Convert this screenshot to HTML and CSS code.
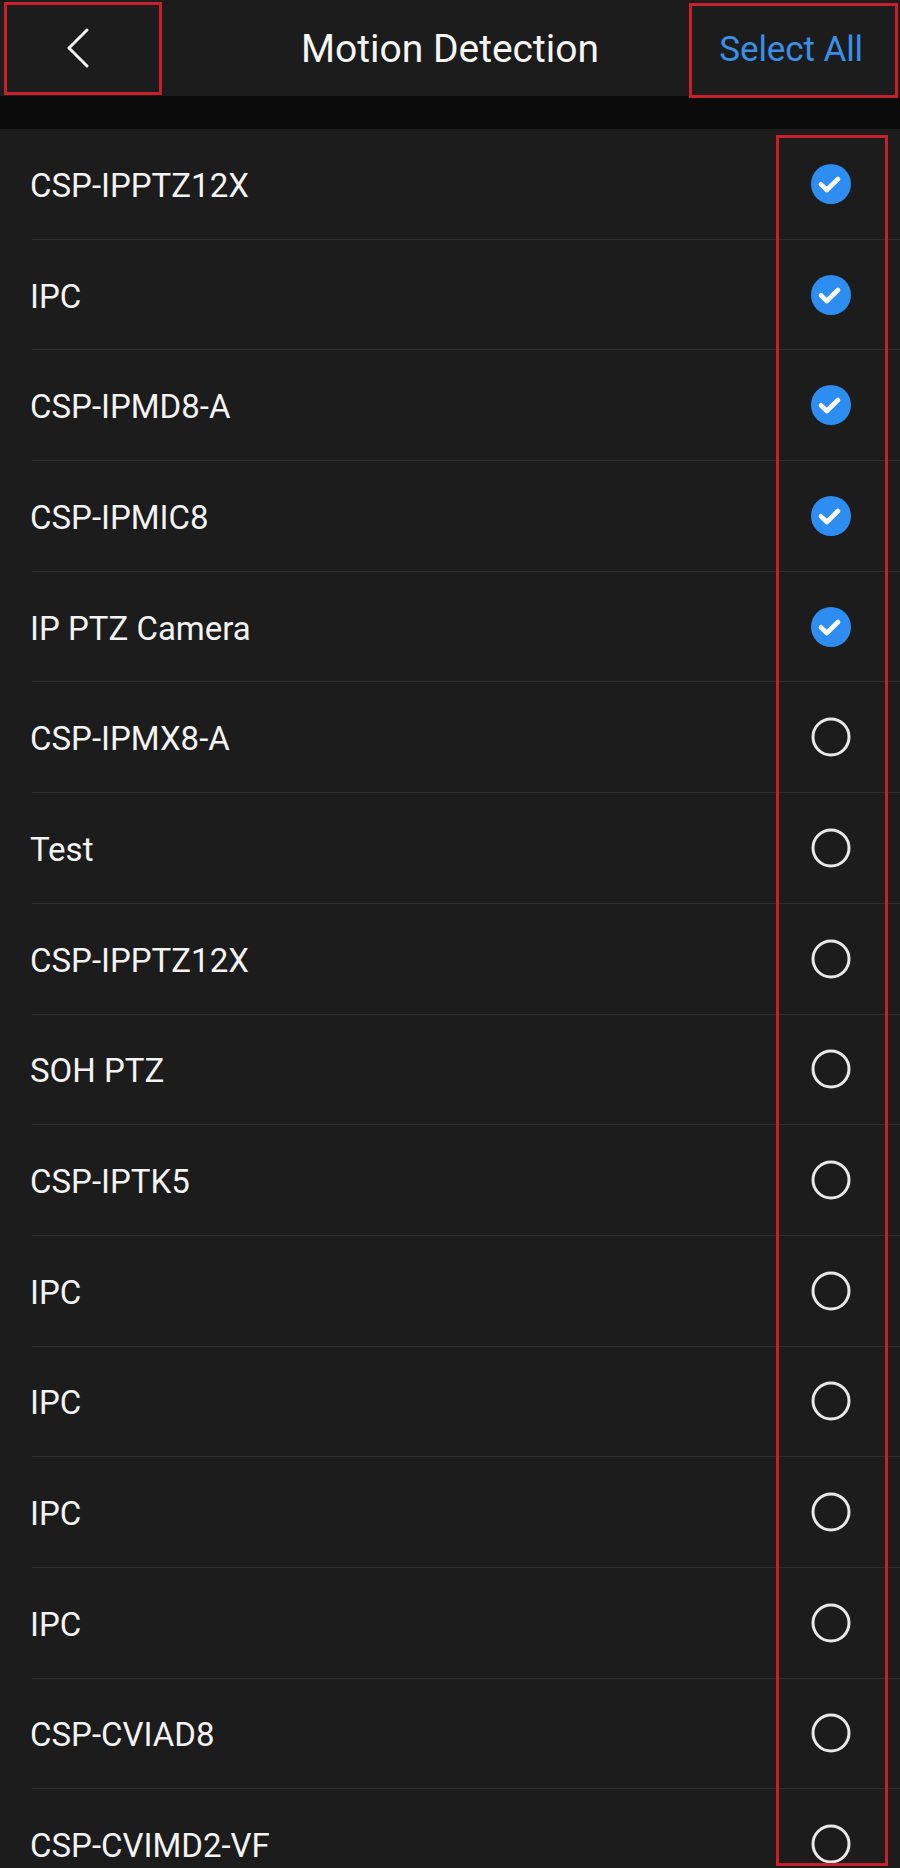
FILE: index.html
```html
<!DOCTYPE html>
<html lang="en">
<head>
<meta charset="utf-8">
<title>Motion Detection</title>
<link rel="stylesheet" href="styles.css">
</head>
<body>
<div class="screen">
  <header class="topbar">
    <button class="back" aria-label="Back">
      <svg width="24" height="40" viewBox="0 0 24 40"><path d="M21 2 L3 20 L21 38" fill="none" stroke="#f5f5f5" stroke-width="3" stroke-linecap="round" stroke-linejoin="round"/></svg>
    </button>
    <h1 class="title">Motion Detection</h1>
    <button class="select-all">Select All</button>
  </header>
  <div class="band"></div>
  <ul class="list">
    <li class="row"><span class="name">CSP-IPPTZ12X</span><span class="check on"><svg width="40" height="40" viewBox="0 0 40 40"><circle cx="20" cy="20" r="20" fill="#2e8df0"/><path d="M10 20.3 L15.8 26 L27 15" fill="none" stroke="#fff" stroke-width="4.6" stroke-linecap="round" stroke-linejoin="round"/></svg></span></li>
    <li class="row"><span class="name">IPC</span><span class="check on"><svg width="40" height="40" viewBox="0 0 40 40"><circle cx="20" cy="20" r="20" fill="#2e8df0"/><path d="M10 20.3 L15.8 26 L27 15" fill="none" stroke="#fff" stroke-width="4.6" stroke-linecap="round" stroke-linejoin="round"/></svg></span></li>
    <li class="row"><span class="name">CSP-IPMD8-A</span><span class="check on"><svg width="40" height="40" viewBox="0 0 40 40"><circle cx="20" cy="20" r="20" fill="#2e8df0"/><path d="M10 20.3 L15.8 26 L27 15" fill="none" stroke="#fff" stroke-width="4.6" stroke-linecap="round" stroke-linejoin="round"/></svg></span></li>
    <li class="row"><span class="name">CSP-IPMIC8</span><span class="check on"><svg width="40" height="40" viewBox="0 0 40 40"><circle cx="20" cy="20" r="20" fill="#2e8df0"/><path d="M10 20.3 L15.8 26 L27 15" fill="none" stroke="#fff" stroke-width="4.6" stroke-linecap="round" stroke-linejoin="round"/></svg></span></li>
    <li class="row"><span class="name">IP PTZ Camera</span><span class="check on"><svg width="40" height="40" viewBox="0 0 40 40"><circle cx="20" cy="20" r="20" fill="#2e8df0"/><path d="M10 20.3 L15.8 26 L27 15" fill="none" stroke="#fff" stroke-width="4.6" stroke-linecap="round" stroke-linejoin="round"/></svg></span></li>
    <li class="row"><span class="name">CSP-IPMX8-A</span><span class="check"><svg width="40" height="40" viewBox="0 0 40 40"><circle cx="20" cy="20" r="18" fill="none" stroke="#e8e8e8" stroke-width="3"/></svg></span></li>
    <li class="row"><span class="name">Test</span><span class="check"><svg width="40" height="40" viewBox="0 0 40 40"><circle cx="20" cy="20" r="18" fill="none" stroke="#e8e8e8" stroke-width="3"/></svg></span></li>
    <li class="row"><span class="name">CSP-IPPTZ12X</span><span class="check"><svg width="40" height="40" viewBox="0 0 40 40"><circle cx="20" cy="20" r="18" fill="none" stroke="#e8e8e8" stroke-width="3"/></svg></span></li>
    <li class="row"><span class="name">SOH PTZ</span><span class="check"><svg width="40" height="40" viewBox="0 0 40 40"><circle cx="20" cy="20" r="18" fill="none" stroke="#e8e8e8" stroke-width="3"/></svg></span></li>
    <li class="row"><span class="name">CSP-IPTK5</span><span class="check"><svg width="40" height="40" viewBox="0 0 40 40"><circle cx="20" cy="20" r="18" fill="none" stroke="#e8e8e8" stroke-width="3"/></svg></span></li>
    <li class="row"><span class="name">IPC</span><span class="check"><svg width="40" height="40" viewBox="0 0 40 40"><circle cx="20" cy="20" r="18" fill="none" stroke="#e8e8e8" stroke-width="3"/></svg></span></li>
    <li class="row"><span class="name">IPC</span><span class="check"><svg width="40" height="40" viewBox="0 0 40 40"><circle cx="20" cy="20" r="18" fill="none" stroke="#e8e8e8" stroke-width="3"/></svg></span></li>
    <li class="row"><span class="name">IPC</span><span class="check"><svg width="40" height="40" viewBox="0 0 40 40"><circle cx="20" cy="20" r="18" fill="none" stroke="#e8e8e8" stroke-width="3"/></svg></span></li>
    <li class="row"><span class="name">IPC</span><span class="check"><svg width="40" height="40" viewBox="0 0 40 40"><circle cx="20" cy="20" r="18" fill="none" stroke="#e8e8e8" stroke-width="3"/></svg></span></li>
    <li class="row"><span class="name">CSP-CVIAD8</span><span class="check"><svg width="40" height="40" viewBox="0 0 40 40"><circle cx="20" cy="20" r="18" fill="none" stroke="#e8e8e8" stroke-width="3"/></svg></span></li>
    <li class="row"><span class="name">CSP-CVIMD2-VF</span><span class="check"><svg width="40" height="40" viewBox="0 0 40 40"><circle cx="20" cy="20" r="18" fill="none" stroke="#e8e8e8" stroke-width="3"/></svg></span></li>
  </ul>
  <div class="annot annot-back"></div>
  <div class="annot annot-select"></div>
  <div class="annot annot-checks"></div>
</div>
</body>
</html>
```

FILE: styles.css
```css
* { box-sizing: border-box; }

html, body {
  margin: 0;
  padding: 0;
  background: #1c1c1c;
}

body {
  font-family: Roboto, "Noto Sans", "Liberation Sans", sans-serif;
  color: #f3f3f3;
}

.screen {
  position: relative;
  width: 900px;
  height: 1868px;
  overflow: hidden;
  background: #1c1c1c;
}

.topbar {
  height: 96px;
  display: grid;
  grid-template-columns: 1fr auto 1fr;
  align-items: center;
  background: #1c1c1c;
}

.back {
  justify-self: start;
  background: none;
  border: 0;
  padding: 0 0 0 66px;
  margin: 0;
  height: 40px;
  display: flex;
  align-items: center;
  cursor: pointer;
}

.title {
  margin: 0;
  font-size: 39px;
  font-weight: 400;
  color: #f5f5f5;
  line-height: 1;
  padding-top: 2px;
}

.select-all {
  justify-self: end;
  background: none;
  border: 0;
  margin: 0;
  padding: 2px 37px 0 0;
  font-family: inherit;
  font-size: 35px;
  color: #3a8fe6;
  line-height: 1;
  letter-spacing: -0.1px;
  cursor: pointer;
}

.band {
  height: 33px;
  background: #0b0b0b;
}

.list {
  list-style: none;
  margin: 0;
  padding: 0;
  background: #1c1c1c;
}

.row {
  height: 110.7px;
  margin-left: 32px;
  padding-right: 49px;
  border-bottom: 1px solid #2f2f2f;
  display: flex;
  align-items: center;
  justify-content: space-between;
}

.name {
  font-size: 33px;
  color: #f3f3f3;
  padding-top: 3px;
  margin-left: -2px;
}

.check {
  width: 40px;
  height: 40px;
  display: flex;
}

.annot {
  position: absolute;
  border: 3px solid #c8202a;
  pointer-events: none;
}

.annot-back {
  left: 4px;
  top: 2px;
  width: 158px;
  height: 93px;
}

.annot-select {
  left: 689px;
  top: 3px;
  width: 209px;
  height: 95px;
}

.annot-checks {
  left: 776px;
  top: 135px;
  width: 112px;
  height: 1731px;
}
```
